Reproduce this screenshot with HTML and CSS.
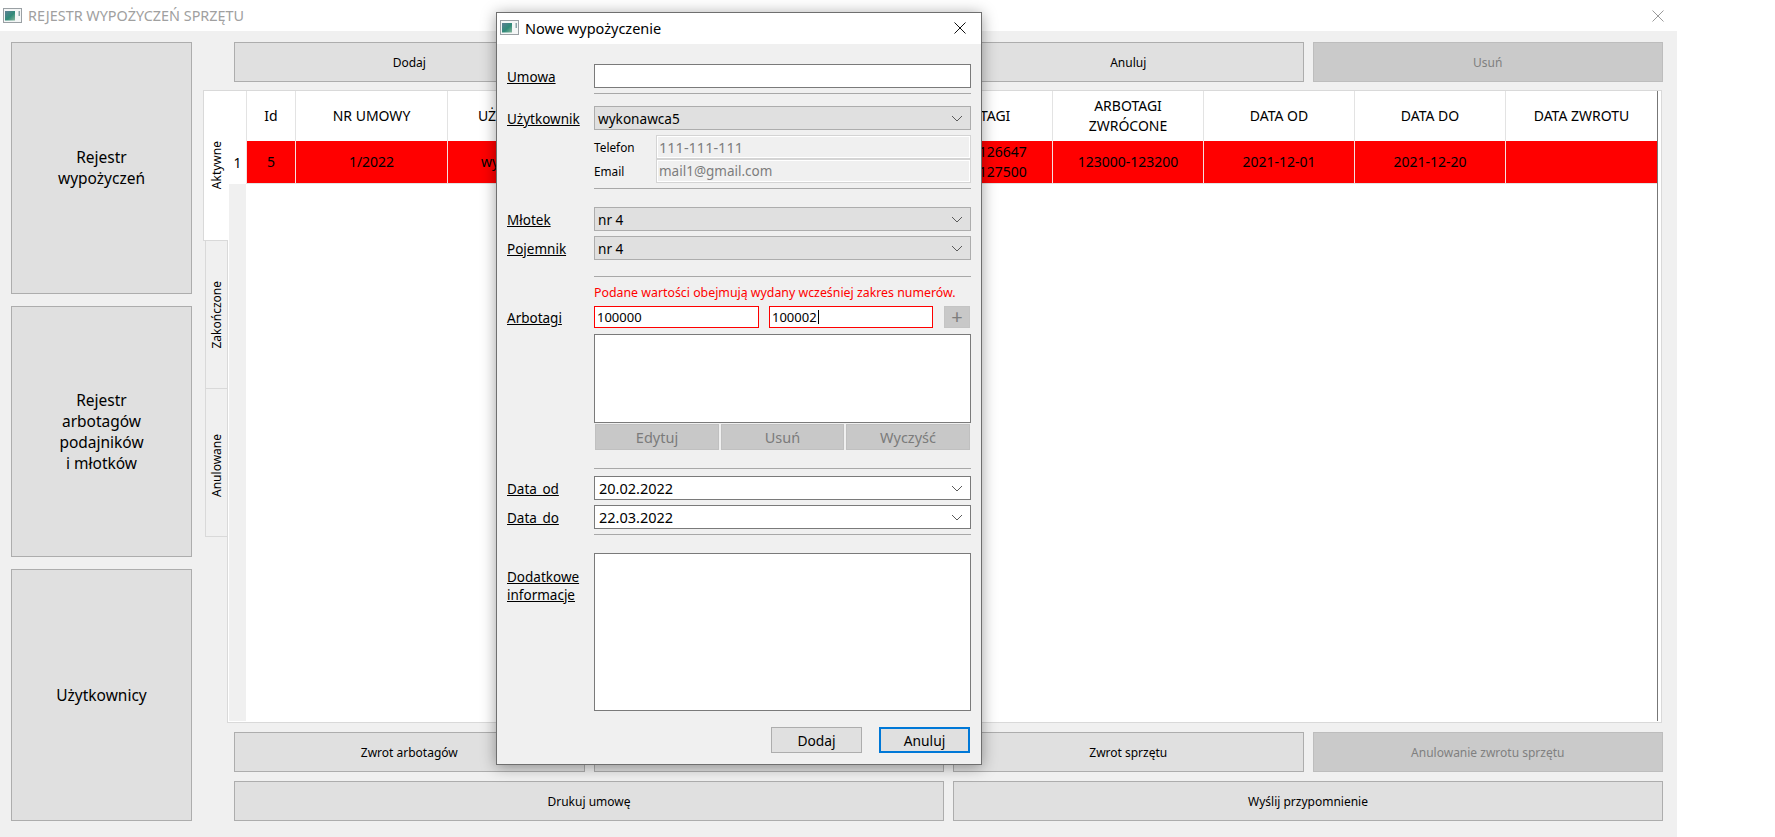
FILE: index.html
```html
<!DOCTYPE html>
<html lang="pl">
<head>
<meta charset="utf-8">
<title>Rejestr wypożyczeń sprzętu</title>
<link rel="stylesheet" href="styles.css">
</head>
<body>
<svg class="defs" width="0" height="0" aria-hidden="true">
  <defs>
    <linearGradient id="appgrad" x1="0" y1="0" x2="1" y2="1">
      <stop offset="0" stop-color="#5f7f95"/>
      <stop offset="0.55" stop-color="#2f8a78"/>
      <stop offset="1" stop-color="#86b59b"/>
    </linearGradient>
  </defs>
  <symbol id="appicon" viewBox="0 0 19 15">
    <rect x="0.5" y="0.5" width="18" height="14" fill="#f4f6f6" stroke="#9aa0a4"/>
    <rect x="2" y="3" width="10" height="9.5" fill="url(#appgrad)"/>
    <rect x="15.5" y="3" width="1.5" height="5" fill="#8aa5a8"/>
  </symbol>
  <symbol id="chev" viewBox="0 0 12 7">
    <path d="M1 1l5 5 5-5" fill="none" stroke="#5a5a5a" stroke-width="1"/>
  </symbol>
</svg>
<div class="window">
  <header class="titlebar">
    <svg class="appicon"><use href="#appicon"/></svg>
    <span class="wintitle">REJESTR WYPOŻYCZEŃ SPRZĘTU</span>
    <svg class="winclose" viewBox="0 0 12 12"><path d="M0.5 0.5l11 11M11.5 0.5l-11 11" stroke="#9a9a9a" fill="none"/></svg>
  </header>
  <main class="content">
    <nav class="sidenav">
      <button class="btn nav-btn">Rejestr<br>wypożyczeń</button>
      <button class="btn nav-btn">Rejestr<br>arbotagów<br>podajników<br>i młotków</button>
      <button class="btn nav-btn">Użytkownicy</button>
    </nav>
    <section class="workarea">
      <div class="row-four">
        <button class="btn">Dodaj</button>
        <button class="btn"></button>
        <button class="btn">Anuluj</button>
        <button class="btn disabled">Usuń</button>
      </div>
      <div class="tabs">
        <div class="tabbar">
          <div class="tab active"><span>Aktywne</span></div>
          <div class="tab"><span>Zakończone</span></div>
          <div class="tab"><span>Anulowane</span></div>
        </div>
        <div class="pane">
          <div class="table">
            <div class="rowhead">
              <div class="corner"></div>
              <div class="rownum">1</div>
            </div>
            <div class="grid">
              <div class="th">Id</div>
              <div class="th">NR UMOWY</div>
              <div class="th">UŻYTKOWNIK</div>
              <div class="th"></div>
              <div class="th"></div>
              <div class="th">ARBOTAGI</div>
              <div class="th">ARBOTAGI<br>ZWRÓCONE</div>
              <div class="th">DATA OD</div>
              <div class="th">DATA DO</div>
              <div class="th">DATA ZWROTU</div>
              <div class="td">5</div>
              <div class="td">1/2022</div>
              <div class="td">wykonawca5</div>
              <div class="td"></div>
              <div class="td"></div>
              <div class="td">126000-126647<br>127000-127500</div>
              <div class="td">123000-123200</div>
              <div class="td">2021-12-01</div>
              <div class="td">2021-12-20</div>
              <div class="td"></div>
            </div>
          </div>
        </div>
      </div>
      <div class="row-four">
        <button class="btn">Zwrot arbotagów</button>
        <button class="btn"></button>
        <button class="btn">Zwrot sprzętu</button>
        <button class="btn disabled">Anulowanie zwrotu sprzętu</button>
      </div>
      <div class="row-two">
        <button class="btn">Drukuj umowę</button>
        <button class="btn">Wyślij przypomnienie</button>
      </div>
    </section>
  </main>
</div>

<div class="dialog">
  <header class="dlg-title">
    <svg class="appicon"><use href="#appicon"/></svg>
    <span class="dlg-name">Nowe wypożyczenie</span>
    <svg class="dlg-close" viewBox="0 0 12 12"><path d="M0.5 0.5l11 11M11.5 0.5l-11 11" stroke="#111" fill="none"/></svg>
  </header>
  <div class="dlg-body">
    <div class="frow umowa-row"><label class="lbl">Umowa</label><div class="input"></div></div>
    <hr class="sep sep-a">
    <div class="frow user-row"><label class="lbl">Użytkownik</label><div class="combo">wykonawca5<svg class="chev"><use href="#chev"/></svg></div></div>
    <div class="subrow phone"><span class="sublbl">Telefon</span><div class="ro">111-111-111</div></div>
    <div class="subrow email"><span class="sublbl">Email</span><div class="ro ro-mail">mail1@gmail.com</div></div>
    <hr class="sep sep-b">
    <div class="frow mlotek-row"><label class="lbl">Młotek</label><div class="combo">nr 4<svg class="chev"><use href="#chev"/></svg></div></div>
    <div class="frow pojemnik-row"><label class="lbl">Pojemnik</label><div class="combo">nr 4<svg class="chev"><use href="#chev"/></svg></div></div>
    <hr class="sep sep-c">
    <div class="error">Podane wartości obejmują wydany wcześniej zakres numerów.</div>
    <div class="frow arb-row">
      <label class="lbl">Arbotagi</label>
      <div class="arb-fields">
        <div class="input invalid">100000</div>
        <div class="input invalid">100002<span class="caret"></span></div>
        <button class="plus">+</button>
      </div>
    </div>
    <div class="listbox"></div>
    <div class="listbtns">
      <button class="lbtn">Edytuj</button>
      <button class="lbtn">Usuń</button>
      <button class="lbtn">Wyczyść</button>
    </div>
    <hr class="sep sep-d">
    <div class="frow date-od"><label class="lbl">Data od</label><div class="date">20.02.2022<svg class="chev"><use href="#chev"/></svg></div></div>
    <div class="frow date-do"><label class="lbl">Data do</label><div class="date">22.03.2022<svg class="chev"><use href="#chev"/></svg></div></div>
    <hr class="sep sep-e">
    <div class="frow info-row">
      <label class="lbl info-lbl">Dodatkowe<br>informacje</label>
      <div class="textarea"></div>
    </div>
    <div class="dlg-actions">
      <button class="dbtn">Dodaj</button>
      <button class="dbtn focused">Anuluj</button>
    </div>
  </div>
</div>
</body>
</html>
```

FILE: styles.css
```css
* { box-sizing: border-box; }
html, body { margin: 0; height: 100%; background: #fff; overflow: hidden; }
body { font-family: "Noto Sans", "Liberation Sans", sans-serif; color: #000; }
.defs { position: absolute; }
button { font-family: inherit; padding: 0; margin: 0; color: inherit; }

.window { width: 1677px; height: 837px; display: flex; flex-direction: column; }
.titlebar { height: 31px; background: #fff; display: flex; align-items: center; padding-left: 3px; }
.appicon { width: 19px; height: 15px; flex: none; }
.wintitle { margin-left: 6px; font-size: 14.4px; color: #a0a0a0; }
.winclose { width: 12px; height: 12px; margin-left: auto; margin-right: 13px; }
.content { flex: 1; background: #f0f0f0; display: flex; padding: 11px 14px 16px 11px; }

.btn { background: #e0e0e0; border: 1px solid #adadad; font-size: 12px; letter-spacing: 0; }
.btn.disabled { background: #cacaca; color: #808080; border-color: #bdbdbd; }
.sidenav { width: 181px; display: flex; flex-direction: column; gap: 12px; flex: none; }
.nav-btn { flex: 1; font-size: 15.5px; line-height: 21px; }
.workarea { flex: 1; margin-left: 42px; display: flex; flex-direction: column; min-width: 0; position: relative; }
.row-four { height: 40px; display: grid; grid-template-columns: repeat(4, 1fr); column-gap: 9px; flex: none; }
.row-two { height: 40px; display: grid; grid-template-columns: repeat(2, 1fr); column-gap: 9px; flex: none; margin-top: 9px; }

.tabs { flex: 1; margin: 8px 1px 9px -30px; display: flex; min-height: 0; }
.tabbar { width: 25px; flex: none; display: flex; flex-direction: column; position: relative; z-index: 1; }
.tab { width: 22px; height: 148px; margin-left: 1px; border: 1px solid #d9d9d9; border-right: 0; border-top: 0; background: #f0f0f0; display: flex; align-items: center; justify-content: center; }
.tab span { writing-mode: vertical-rl; transform: rotate(180deg); font-size: 12px; }
.tab:last-child { padding-top: 5px; }
.tab.active { width: 25px; height: 151px; margin: 0 0 0 -1px; background: #fff; border-top: 1px solid #d9d9d9; }
.pane { flex: 1; margin-left: -2px; background: #fff; border: 1px solid #d9d9d9; padding: 0 3px 1px 1px; min-width: 0; }
.table { height: 100%; display: flex; border-right: 1px solid #777; }
.rowhead { width: 17px; flex: none; background: #f0f0f0; }
.corner { height: 50px; background: #fff; }
.rownum { height: 43px; background: #fff; display: flex; align-items: center; justify-content: center; font-size: 14px; }
.grid { flex: 1; display: grid; background: #fff; grid-template-columns: 49px 152px 151px 151px 151px 152px 151px 151px 151px 1fr; grid-template-rows: 50px 43px; align-content: start; }
.th, .td { display: flex; align-items: center; justify-content: center; text-align: center; border-left: 1px solid #e3e3e3; font-size: 14px; line-height: 20px; }
.td { background: #f00; border-left-color: #f5dede; border-bottom: 1px solid #e3e3e3; }

.dialog { position: absolute; left: 496px; top: 12px; width: 486px; height: 753px; background: #f0f0f0; border: 1px solid #6f6f6f; box-shadow: 0 2px 14px rgba(0,0,0,.38); display: flex; flex-direction: column; }
.dlg-title { height: 31px; background: #fff; display: flex; align-items: center; padding: 0 0 2px 3px; flex: none; }
.dlg-name { margin-left: 6px; font-size: 14.5px; }
.dlg-close { width: 12px; height: 12px; margin-left: auto; margin-right: 15px; }
.dlg-body { flex: 1; padding: 0 10px 0 10px; display: flex; flex-direction: column; }

.frow { display: flex; align-items: center; height: 24px; }
.lbl { width: 87px; flex: none; font-size: 13.5px; word-spacing: 2px; text-decoration: underline; line-height: 18px; padding-top: 2px; }
.input, .combo, .date, .textarea, .listbox { flex: 1; border: 1px solid #7a7a7a; background: #fff; }
.input { height: 100%; font-size: 13px; display: flex; align-items: center; padding-left: 2px; }
.combo { height: 100%; background: #e0e0e0; border-color: #adadad; display: flex; align-items: center; padding: 0 6px 0 3px; font-size: 13.6px; }
.date { height: 100%; display: flex; align-items: center; padding: 0 6px 0 4px; font-size: 14.5px; }
.chev { width: 12px; height: 7px; margin-left: auto; margin-right: 1px; }
.sep { border: 0; height: 1px; background: #a8a8a8; margin: 0 0 0 87px; flex: none; }
.umowa-row { margin-top: 20px; }
.sep-a { margin-top: 5px; }
.user-row { margin-top: 12px; }
.subrow { display: flex; align-items: center; margin-left: 87px; height: 24px; }
.phone { margin-top: 5px; }
.email { margin-top: 0; }
.sublbl { width: 62px; flex: none; font-size: 11.8px; }
.ro { flex: 1; height: 100%; border: 1px solid #d4d4d4; box-shadow: inset 0 0 0 1px #fff; background: #f0f0f0; color: #7d7d7d; font-size: 14.5px; display: flex; align-items: center; padding-left: 2px; }
.ro-mail { font-size: 13.5px; }
.sep-b { margin-top: 5px; }
.mlotek-row { margin-top: 18px; }
.pojemnik-row { margin-top: 5px; }
.sep-c { margin-top: 16px; }
.error { margin: 7px 0 0 87px; height: 17px; color: #f00; font-size: 12.35px; line-height: 17px; white-space: nowrap; }
.arb-row { margin-top: 5px; height: 22px; }
.arb-fields { flex: 1; height: 100%; display: flex; }
.arb-fields .input { flex: none; width: 165px; }
.arb-fields .input + .input { width: 164px; margin-left: 10px; }
.invalid { border-color: #f00; color: #000; font-size: 13px; }
.caret { width: 1px; height: 14px; background: #000; margin-left: 1px; }
.plus { width: 26px; height: 100%; margin-left: 11px; background: #c8c8c8; border: 1px solid #c4c4c4; color: #7d7d7d; font-size: 20px; line-height: 18px; }
.listbox { flex: none; height: 89px; margin: 6px 0 0 87px; }
.listbtns { margin: 1px 1px 0 88px; display: grid; grid-template-columns: 124px 123px 124px; column-gap: 2px; height: 26px; flex: none; }
.lbtn { background: #c8c8c8; border: 1px solid #c0c0c0; color: #7b7b7b; font-size: 14.5px; }
.sep-d { margin-top: 18px; }
.date-od { margin-top: 7px; }
.date-do { margin-top: 5px; }
.sep-e { margin-top: 5px; }
.info-row { margin-top: 18px; height: 158px; align-items: flex-start; }
.textarea { height: 100%; }
.info-lbl { margin-top: 13px; }
.dlg-actions { display: flex; justify-content: flex-end; gap: 17px; margin: 16px 1px 0 0; }
.dbtn { width: 91px; height: 26px; background: #e0e0e0; border: 1px solid #adadad; font-size: 13.8px; }
.dbtn.focused { border: 2px solid #0078d7; }
```
